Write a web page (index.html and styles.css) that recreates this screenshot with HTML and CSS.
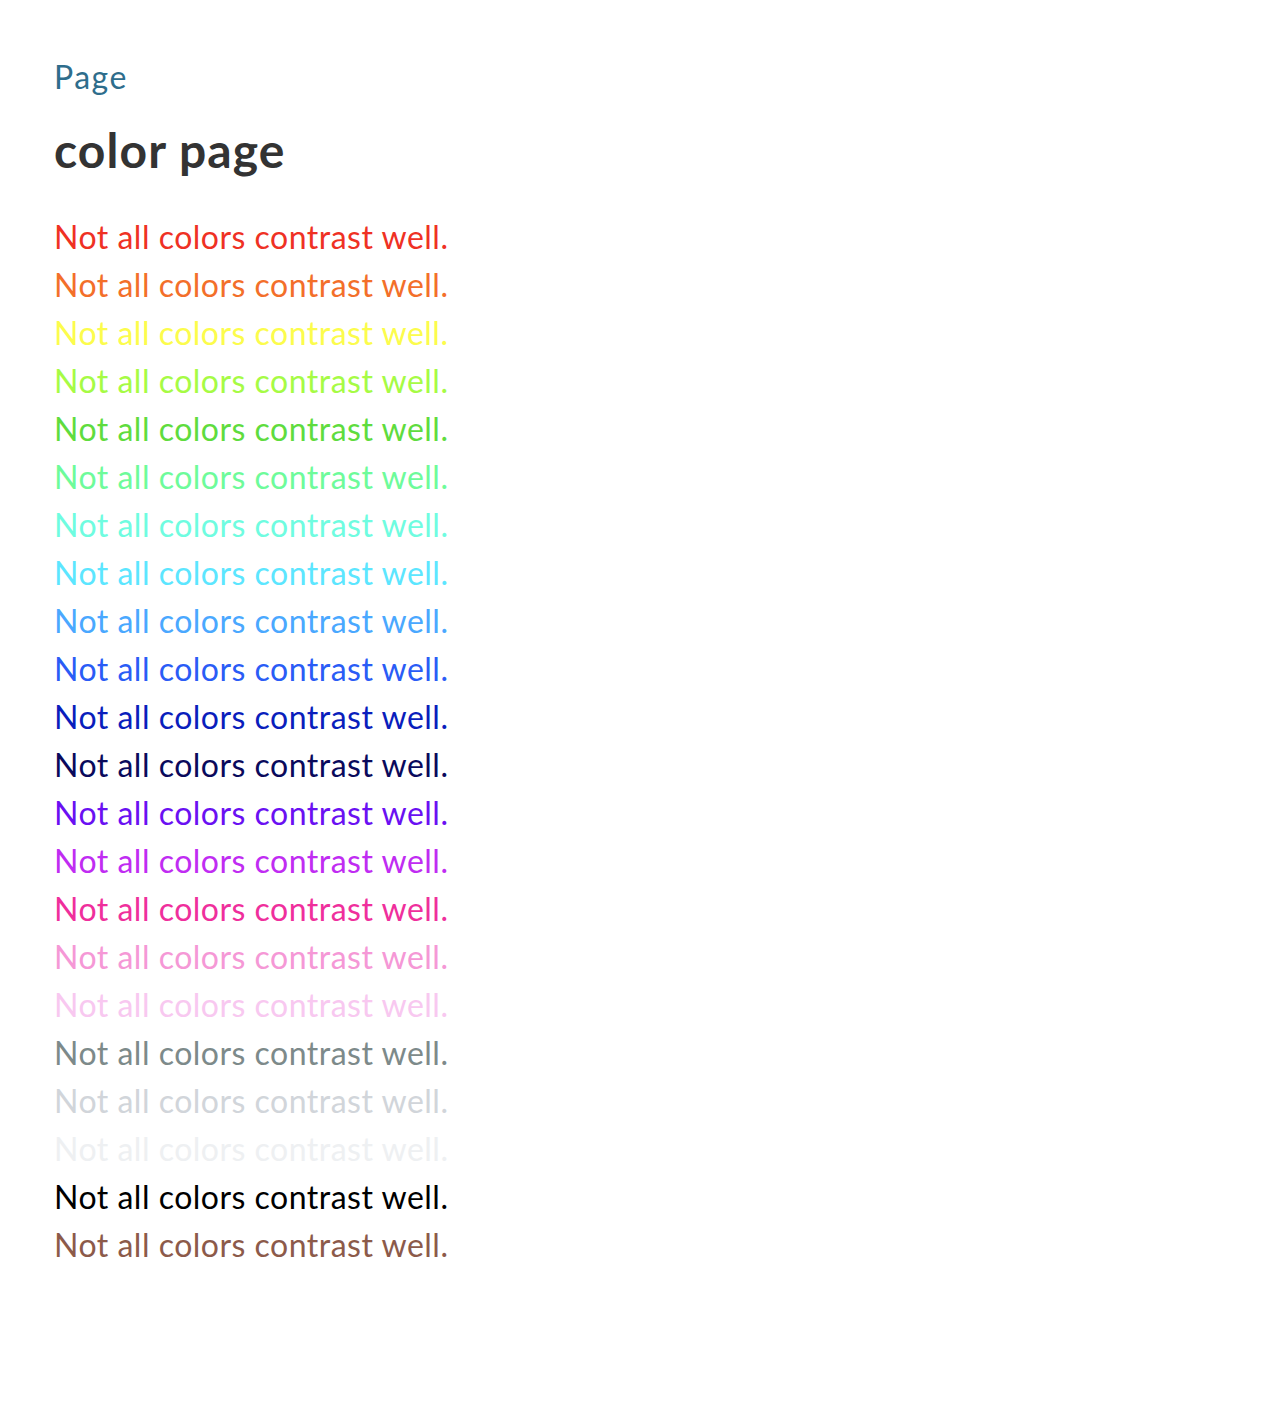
FILE: index.html
```html
<!DOCTYPE html>
<html lang="en">
<head>
<meta charset="utf-8">
<title>color page</title>
<link rel="stylesheet" href="styles.css">
</head>
<body>
<main class="page">
  <nav class="crumbs"><a class="crumb" href="#">Page</a></nav>
  <h1 class="title">color page</h1>
  <div class="swatches">
    <p class="line c-red">Not all colors contrast well.</p>
    <p class="line c-orange">Not all colors contrast well.</p>
    <p class="line c-yellow">Not all colors contrast well.</p>
    <p class="line c-lime">Not all colors contrast well.</p>
    <p class="line c-green">Not all colors contrast well.</p>
    <p class="line c-mint">Not all colors contrast well.</p>
    <p class="line c-aqua">Not all colors contrast well.</p>
    <p class="line c-cyan">Not all colors contrast well.</p>
    <p class="line c-sky">Not all colors contrast well.</p>
    <p class="line c-blue">Not all colors contrast well.</p>
    <p class="line c-darkblue">Not all colors contrast well.</p>
    <p class="line c-navy">Not all colors contrast well.</p>
    <p class="line c-violet">Not all colors contrast well.</p>
    <p class="line c-purple">Not all colors contrast well.</p>
    <p class="line c-magenta">Not all colors contrast well.</p>
    <p class="line c-pink">Not all colors contrast well.</p>
    <p class="line c-lightpink">Not all colors contrast well.</p>
    <p class="line c-gray">Not all colors contrast well.</p>
    <p class="line c-lightgray">Not all colors contrast well.</p>
    <p class="line c-lightergray">Not all colors contrast well.</p>
    <p class="line c-black">Not all colors contrast well.</p>
    <p class="line c-brown">Not all colors contrast well.</p>
  </div>
</main>
</body>
</html>
```

FILE: styles.css
```css
html, body {
  margin: 0;
  padding: 0;
  background: #ffffff;
}

body {
  font-family: "Lato", "Noto Sans", sans-serif;
  color: #333333;
}

.page {
  padding: 53px 55px 0 54px;
}

.crumbs {
  font-size: 32px;
  line-height: 48px;
  letter-spacing: 1.5px;
}

.crumb {
  color: #2e6d8c;
  text-decoration: none;
}

.title {
  margin: 21px 0 35px 0;
  font-size: 48px;
  line-height: 56px;
  font-weight: 700;
  letter-spacing: 1.1px;
  color: #333333;
}

.swatches {
  display: flex;
  flex-direction: column;
}

.line {
  margin: 0;
  font-size: 32px;
  line-height: 48px;
  letter-spacing: 0.5px;
}

.c-red { color: #ef3124; }
.c-orange { color: #f36f2a; }
.c-yellow { color: #fcfc4c; }
.c-lime { color: #a6fb45; }
.c-green { color: #5fdc3e; }
.c-mint { color: #6efb9a; }
.c-aqua { color: #6ffce0; }
.c-cyan { color: #5ce6ff; }
.c-sky { color: #4aa8ff; }
.c-blue { color: #2a5cf6; }
.c-darkblue { color: #0a1ebc; }
.c-navy { color: #0a0a5c; }
.c-violet { color: #6a10f2; }
.c-purple { color: #c02cf2; }
.c-magenta { color: #ef2f9c; }
.c-pink { color: #f598d6; }
.c-lightpink { color: #f8c8f0; }
.c-gray { color: #7d8a8a; }
.c-lightgray { color: #d1d5da; }
.c-lightergray { color: #eef0f2; }
.c-black { color: #000000; }
.c-brown { color: #8c5a4a; }
```
